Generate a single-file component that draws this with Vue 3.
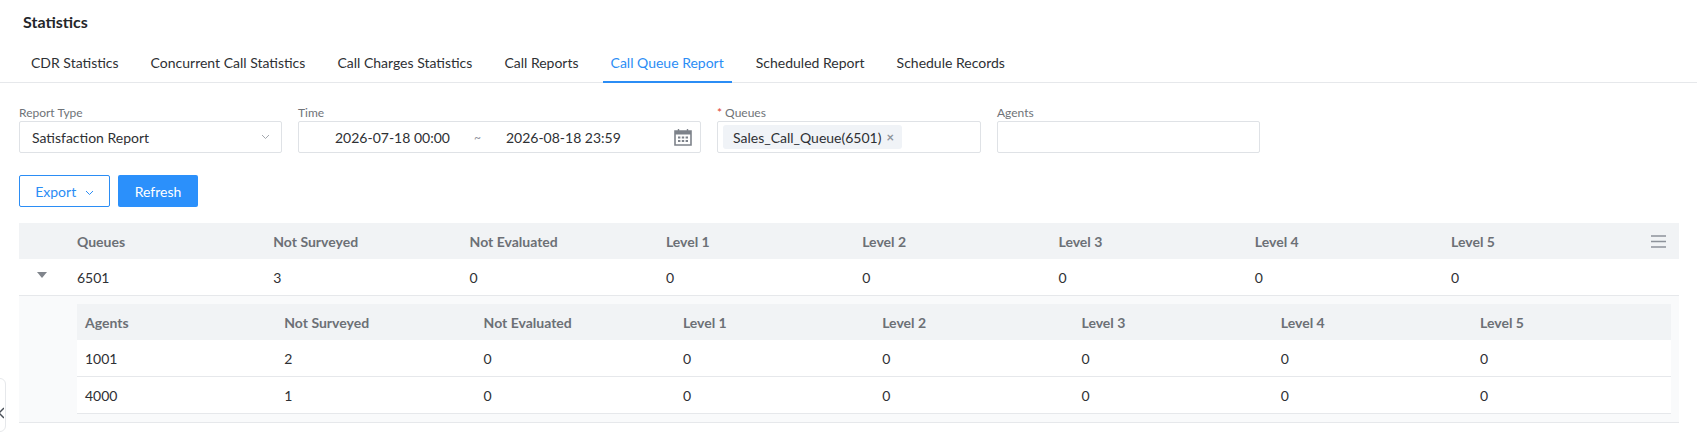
<script setup>
const tabs = ['CDR Statistics', 'Concurrent Call Statistics', 'Call Charges Statistics', 'Call Reports', 'Call Queue Report', 'Scheduled Report', 'Schedule Records']
const levels = ['Not Surveyed', 'Not Evaluated', 'Level 1', 'Level 2', 'Level 3', 'Level 4', 'Level 5']
const agents = [
  { id: '1001', values: [2, 0, 0, 0, 0, 0, 0] },
  { id: '4000', values: [1, 0, 0, 0, 0, 0, 0] }
]
const queueRow = [3, 0, 0, 0, 0, 0, 0]
</script>

<template>
  <main class="page">
    <h1 class="title">Statistics</h1>
    <nav class="tabs">
      <a v-for="t in tabs" :key="t" class="tab" :class="{ active: t === 'Call Queue Report' }">{{ t }}</a>
    </nav>

    <section class="filters">
      <div class="field f-type">
        <label>Report Type</label>
        <div class="box select">
          <span>Satisfaction Report</span>
          <svg class="chev" width="9" height="6" viewBox="0 0 9 6"><path d="M1 1l3.5 3.5L8 1" fill="none" stroke="#a4a8ae" stroke-width="1"/></svg>
        </div>
      </div>
      <div class="field f-time">
        <label>Time</label>
        <div class="box range">
          <span class="from">2026-07-18 00:00</span>
          <span class="tilde">~</span>
          <span class="to">2026-08-18 23:59</span>
          <svg class="cal" width="18" height="18" viewBox="0 0 18 18">
            <path d="M1 3h16v14H1z" fill="none" stroke="#7d828a" stroke-width="1.6"/>
            <path d="M1 3h16v3.5H1z" fill="#7d828a"/>
            <path d="M4.500 1v3M13.500 1v3" stroke="#7d828a" stroke-width="1.400"/>
            <path d="M4 8.500h2.400v2H4zM7.800 8.500h2.400v2H7.800zM11.600 8.500H14v2h-2.400zM4 12h2.400v2H4zM7.800 12h2.400v2H7.800zM11.600 12H14v2h-2.400z" fill="#7d828a"/>
          </svg>
        </div>
      </div>
      <div class="field f-queue">
        <label><i class="req">*</i>Queues</label>
        <div class="box tagbox">
          <span class="tag">Sales_Call_Queue(6501)<span class="x">×</span></span>
        </div>
      </div>
      <div class="field f-agent">
        <label>Agents</label>
        <div class="box"></div>
      </div>
    </section>

    <div class="actions">
      <button class="btn outline">Export
        <svg width="9" height="6" viewBox="0 0 9 6"><path d="M1 1l3.5 3.5L8 1" fill="none" stroke="#2b8df5" stroke-width="1"/></svg>
      </button>
      <button class="btn primary">Refresh</button>
    </div>

    <section class="table">
      <div class="row head outer">
        <span></span>
        <span>Queues</span>
        <span v-for="l in levels" :key="l">{{ l }}</span>
        <svg class="menu" width="15" height="13" viewBox="0 0 15 13"><path d="M0 1h15M0 6.500h15M0 12h15" stroke="#8d929a" stroke-width="1.500"/></svg>
      </div>
      <div class="row body outer">
        <span class="caret"></span>
        <span>6501</span>
        <span v-for="(v, i) in queueRow" :key="i">{{ v }}</span>
      </div>
      <div class="expand">
        <div class="row head inner">
          <span>Agents</span>
          <span v-for="l in levels" :key="l">{{ l }}</span>
        </div>
        <div v-for="a in agents" :key="a.id" class="row body inner">
          <span>{{ a.id }}</span>
          <span v-for="(v, i) in a.values" :key="i">{{ v }}</span>
        </div>
      </div>
    </section>

    <div class="side-tab">
      <svg width="6" height="12" viewBox="0 0 6 12"><path d="M6 1L1 6l5 5" fill="none" stroke="#4a5058" stroke-width="1.400"/></svg>
    </div>
  </main>
</template>

<style>
html, body { margin: 0; background: #fff; overflow: hidden; }
</style>

<style scoped>
.page {
  position: relative;
  height: 439px;
  overflow: hidden;
  font-family: Lato, "Open Sans", sans-serif;
  font-size: 14px;
  color: #2e3034;
}
.title {
  margin: 0;
  padding: 12px 0 0 23px;
  height: 34px;
  font-size: 16px;
  line-height: 20px;
  font-weight: 700;
  color: #24262a;
}
.tabs {
  display: flex;
  height: 36px;
  border-bottom: 1px solid #e6e8eb;
  padding-left: 15px;
}
.tab {
  position: relative;
  padding: 8px 16px 0;
  line-height: 17px;
}
.tab.active { color: #2b8df5; }
.tab.active::after {
  content: "";
  position: absolute;
  left: 8px;
  right: 8px;
  bottom: -1px;
  height: 2px;
  background: #2b8df5;
}
.filters {
  display: flex;
  padding: 21px 0 0 19px;
}
.field { margin-right: 16px; }
.f-type { width: 263px; }
.f-time { width: 403px; }
.f-queue { width: 264px; }
.f-agent { width: 263px; }
label {
  display: block;
  height: 17px;
  font-size: 12px;
  line-height: 17px;
  color: #6f7378;
}
.req {
  color: #e0412c;
  font-style: normal;
  margin-right: 3px;
}
.box {
  position: relative;
  display: flex;
  align-items: center;
  height: 32px;
  box-sizing: border-box;
  border: 1px solid #dfe2e6;
  border-radius: 2px;
  background: #fff;
}
.select { padding: 0 10px 0 12px; justify-content: space-between; }
.chev { margin-right: 1px; }
.range .from { margin-left: 36px; }
.range .tilde { margin-left: 24px; color: #8d929a; font-size: 12px; }
.range .to { margin-left: 25px; }
.cal { position: absolute; right: 8px; top: 6px; }
.tagbox { padding-left: 5px; }
.tag {
  display: flex;
  align-items: center;
  height: 24px;
  width: 179px;
  box-sizing: border-box;
  padding-left: 10px;
  background: #f0f3f7;
  border-radius: 3px;
}
.x { margin-left: 5px; color: #8d929a; font-size: 13px; font-weight: 700; }
.actions {
  display: flex;
  gap: 8px;
  padding: 22px 0 0 19px;
}
.btn {
  height: 32px;
  box-sizing: border-box;
  border-radius: 2px;
  font-family: inherit;
  font-size: 14px;
  padding: 0;
}
.outline {
  width: 91px;
  border: 1px solid #2b8df5;
  background: #fff;
  color: #2b8df5;
}
.outline svg { margin-left: 5px; vertical-align: 1px; }
.primary {
  width: 80px;
  border: 0;
  background: #2b90fb;
  color: #fff;
}
.table {
  margin: 16px 18px 0 19px;
}
.row {
  display: grid;
  align-items: center;
  position: relative;
}
.outer {
  grid-template-columns: 58px repeat(7, 196.3px) 1fr;
  height: 36px;
}
.inner {
  grid-template-columns: repeat(7, 199.3px) 1fr;
  padding-left: 8px;
  height: 36px;
}
.head {
  background: #f1f3f5;
  color: #6c7076;
  font-weight: 700;
}
.body { border-bottom: 1px solid #e6e8eb; box-sizing: content-box; }
.inner.body { background: #fff; }
.menu { position: absolute; right: 13px; top: 12px; }
.caret {
  width: 0;
  height: 0;
  margin: 0 0 4px 18px;
  border-left: 5px solid transparent;
  border-right: 5px solid transparent;
  border-top: 6px solid #80858c;
}
.expand {
  background: #f9fafb;
  padding: 8px 8px 8px 58px;
  border-bottom: 1px solid #e6e8eb;
}
.side-tab {
  position: absolute;
  left: -1px;
  top: 378px;
  width: 7px;
  height: 54px;
  box-sizing: border-box;
  border: 1px solid #e6e8eb;
  border-radius: 0 6px 6px 0;
  background: #fff;
}
.side-tab svg { position: absolute; left: -2px; top: 28px; }
</style>
